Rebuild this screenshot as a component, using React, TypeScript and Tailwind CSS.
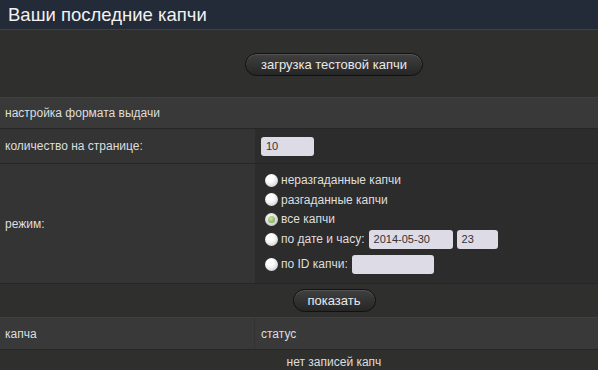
import React from "react";

function Radio({ checked }: { checked?: boolean }) {
  return checked ? (
    <span className="inline-flex h-[13px] w-[13px] shrink-0 items-center justify-center rounded-full bg-[radial-gradient(circle_at_40%_35%,#ffffff,#b8b8b8)]">
      <span className="h-[7px] w-[7px] rounded-full bg-[radial-gradient(circle_at_40%_35%,#c8e6a0,#6f9e48)]" />
    </span>
  ) : (
    <span className="inline-block h-[13px] w-[13px] shrink-0 rounded-full bg-[radial-gradient(circle_at_40%_35%,#ffffff_30%,#bdbdbd)]" />
  );
}

function Btn({ children, w }: { children: React.ReactNode; w: string }) {
  return (
    <button
      className={`${w} h-[23px] rounded-full border border-[#111] bg-[linear-gradient(#404040,#262626)] text-[13px] leading-none text-[#e8e8e8] shadow-[inset_0_1px_0_#555]`}
    >
      {children}
    </button>
  );
}

export default function App() {
  return (
    <div className="h-[370px] w-[598px] overflow-hidden bg-[#2f302e] font-['Liberation_Sans',Arial,sans-serif] text-[#dedede]">
      <div className="w-[668px]">
        <div className="flex h-[30px] items-center border-b border-[#3b404a] bg-[#232a38] pl-[8px] text-[18.5px] text-[#f2f2f2]">
          Ваши последние капчи
        </div>
        <div className="flex h-[67px] items-center justify-center bg-[#2f302e] pt-[1px]">
          <Btn w="w-[178px]">загрузка тестовой капчи</Btn>
        </div>
        <div className="flex h-[31px] items-center border-t border-[#3f3f3f] bg-[#393939] pl-[5px] text-[12px]">
          настройка формата выдачи
        </div>
        <div className="grid grid-cols-[255px_1fr] border-t border-[#262626]">
          <div className="flex h-[34px] items-center bg-[#343434] pl-[5px] text-[12px]">количество на странице:</div>
          <div className="flex items-center bg-[#2c2c2c] pl-[6px]">
            <div className="flex h-[19px] w-[53px] items-center rounded-[3px] bg-[#dcdbe6] pl-[5px] text-[11px] text-[#333]">10</div>
          </div>
          <div className="flex h-[120px] items-center border-t border-[#262626] bg-[#343434] pl-[5px] text-[12px]">режим:</div>
          <div className="flex flex-col border-t border-[#262626] bg-[#2c2c2c] pt-[6px] pl-[10px] text-[12px]">
            <div className="flex h-[20px] items-center gap-[3px]"><Radio />неразгаданные капчи</div>
            <div className="flex h-[19px] items-center gap-[3px]"><Radio />разгаданные капчи</div>
            <div className="flex h-[20px] items-center gap-[3px]"><Radio checked />все капчи</div>
            <div className="flex h-[20px] items-center gap-[3px]">
              <Radio />по дате и часу:
              <div className="ml-[1px] flex h-[19px] w-[84px] items-center rounded-[3px] bg-[#dcdbe6] pl-[5px] text-[11px] text-[#333]">2014-05-30</div>
              <div className="ml-[1px] flex h-[19px] w-[41px] items-center rounded-[3px] bg-[#dcdbe6] pl-[5px] text-[11px] text-[#333]">23</div>
            </div>
            <div className="mt-[5px] flex h-[20px] items-center gap-[3px]">
              <Radio />по ID капчи:
              <div className="ml-[1px] h-[19px] w-[82px] rounded-[3px] bg-[#dcdbe6]" />
            </div>
          </div>
        </div>
        <div className="flex h-[34px] items-center justify-center border-t border-[#262626] bg-[#2f302e]">
          <Btn w="w-[83px]">показать</Btn>
        </div>
        <div className="grid h-[32px] grid-cols-[255px_1fr] border-t border-[#3f3f3f] bg-[#393939] text-[12px]">
          <div className="flex items-center border-r border-[#333] pl-[5px]">капча</div>
          <div className="flex items-center pl-[6px]">статус</div>
        </div>
        <div className="flex h-[24px] items-center justify-center border-t border-[#262626] bg-[#2f302e] text-[12px]">
          нет записей капч
        </div>
      </div>
    </div>
  );
}
